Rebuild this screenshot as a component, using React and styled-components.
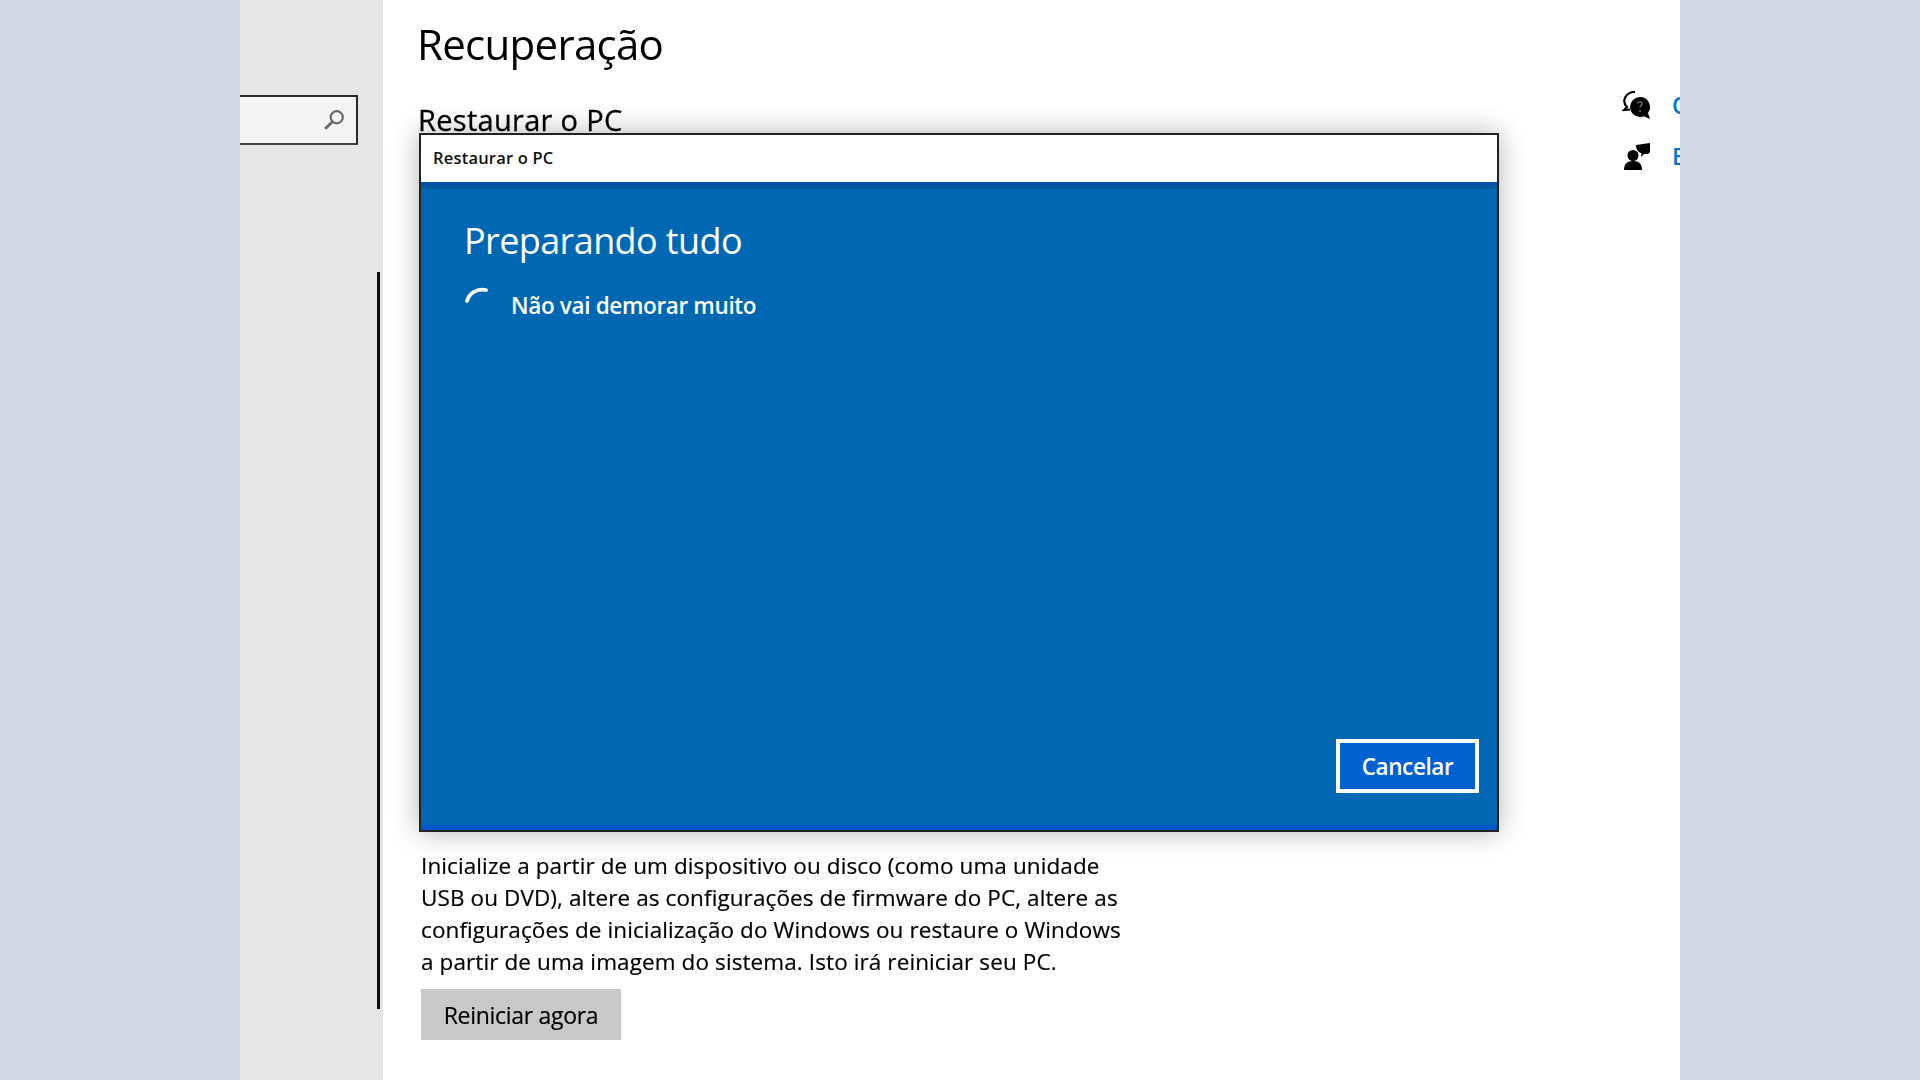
import React from "react";
import styled, { createGlobalStyle } from "styled-components";

const Global = createGlobalStyle`
  html, body { margin: 0; padding: 0; height: 100%; background: #d3d8e6; }
  body { font-family: "Open Sans", "Noto Sans", "Liberation Sans", sans-serif; overflow: hidden; }
`;

const Stage = styled.div`
  width: 1920px;
  height: 1080px;
  padding: 0 240px;
  box-sizing: border-box;
  background: #d3d8e6;
  display: flex;
  position: relative;
`;

const Sidebar = styled.aside`
  width: 143px;
  flex: none;
  background: #e6e6e6;
  padding-top: 95px;
  box-sizing: border-box;
  position: relative;
`;

const SearchBox = styled.div`
  width: 118px;
  height: 50px;
  box-sizing: border-box;
  background: #f3f3f3;
  border: 2px solid #2b2b2b;
  border-bottom-color: #444;
  border-left: none;
  display: flex;
  align-items: center;
  justify-content: flex-end;
  padding-right: 11px;
`;

const ScrollThumb = styled.div`
  position: absolute;
  left: 137px;
  top: 272px;
  width: 3px;
  height: 737px;
  background: #111;
`;

const Main = styled.main`
  flex: 1;
  background: #fff;
  display: flex;
  justify-content: space-between;
  overflow: hidden;
  padding-left: 35px;
`;

const Content = styled.div`
  display: flex;
  flex-direction: column;
  filter: blur(0.35px);
`;

const Title = styled.h1`
  margin: 17px 0 0 -1px;
  font-size: 42px;
  line-height: 54px;
  font-weight: 400;
  color: #000;
  letter-spacing: -0.7px;
`;

const SectionTitle = styled.h2`
  margin: 29px 0 0 0;
  font-size: 29px;
  line-height: 40px;
  font-weight: 500;
  -webkit-text-stroke: 0.3px #000;
  color: #000;
  letter-spacing: 0.3px;
`;

const Description = styled.p`
  margin: 710px 0 0 3px;
  width: 705px;
  font-size: 22.5px;
  line-height: 32px;
  color: #000;
  letter-spacing: 0.1px;
  -webkit-text-stroke: 0.2px #000;
`;

const RestartButton = styled.button`
  margin: 11px 0 0 3px;
  width: 200px;
  height: 51px;
  border: none;
  background: #c9c9c9;
  font: inherit;
  font-size: 23px;
  letter-spacing: -0.3px;
  -webkit-text-stroke: 0.2px #000;
  color: #000;
  padding: 0;
`;

const Help = styled.div`
  display: flex;
  flex-direction: column;
  gap: 21px;
  padding-top: 90px;
  width: 58px;
  flex: none;
  overflow: hidden;
`;

const HelpRow = styled.div`
  display: flex;
  align-items: center;
  gap: 20px;
  height: 30px;
  white-space: nowrap;
  & > svg { flex: none; }
`;

const HelpLink = styled.span`
  color: #0078d7;
  font-size: 23px;
  font-weight: 600;
`;

const Dialog = styled.section`
  position: absolute;
  left: 419px;
  top: 133px;
  width: 1080px;
  height: 699px;
  box-sizing: border-box;
  border: 2px solid #222;
  background: #0067b3;
  box-shadow: 0 0 26px rgba(0, 0, 0, 0.3);
  display: flex;
  flex-direction: column;
`;

const DialogBar = styled.header`
  height: 50px;
  flex: none;
  background: #fff;
  border-bottom: 3px solid #0050a8;
  box-sizing: border-box;
  display: flex;
  align-items: center;
  padding: 0 0 2px 12px;
  font-size: 16.5px;
  font-weight: 600;
  letter-spacing: 0.2px;
  color: #111;
`;

const DialogBody = styled.div`
  flex: 1;
  display: flex;
  flex-direction: column;
  padding: 30px 18px 32px 43px;
  color: #fff;
  border-top: 4px solid #005a9e;
  border-bottom: 5px solid #0058c8;
`;

const Heading = styled.h3`
  margin: -3px 0 0;
  font-size: 36px;
  line-height: 50px;
  font-weight: 400;
  letter-spacing: -0.6px;
`;

const Status = styled.div`
  display: flex;
  align-items: center;
  gap: 21px;
  margin-top: 24px;
  font-size: 22.5px;
  font-weight: 600;
  letter-spacing: -0.35px;
  line-height: 32px;
`;

const Actions = styled.div`
  margin-top: auto;
  display: flex;
  justify-content: flex-end;
`;

const CancelButton = styled.button`
  width: 143px;
  height: 54px;
  box-sizing: border-box;
  border: 4px solid #fff;
  background: #0062d0;
  color: #fff;
  font: inherit;
  font-size: 22.5px;
  font-weight: 600;
  letter-spacing: -0.4px;
  padding: 0;
`;

const SearchIcon = () => (
  <svg width="22" height="22" viewBox="0 0 20 20" fill="none" stroke="#6a6a6a" strokeWidth="2">
    <circle cx="12.5" cy="7.5" r="5.5" />
    <path d="M8.5 11.5 2 18" strokeWidth="2.6" />
  </svg>
);

const ChatIcon = () => (
  <svg width="30" height="30" viewBox="0 0 30 30">
    <path d="M13 2a10 9 0 0 0-8 15l-3 3 6-.5" fill="#fff" stroke="#000" strokeWidth="2.2" />
    <path d="M18 7a10 10 0 0 0 0 20c2 0 3-.4 4-.8l6 2.8-2-6a10 10 0 0 0-8-16z" fill="#000" />
    <path d="M15.5 13.5c1-2.5 5-2 4.5.5-.3 1.500-2 1.800-2 3.500" fill="none" stroke="#777" strokeWidth="1.3" />
    <circle cx="18" cy="21" r="1" fill="#777" />
  </svg>
);

const FeedbackIcon = () => (
  <svg width="30" height="30" viewBox="0 0 30 30" fill="#000">
    <circle cx="11" cy="14.5" r="5.5" />
    <path d="M2 29c0-6 3-9 9-9s9 3 9 9z" />
    <path d="M14 4 28 2v8c0 2-1.500 3-3 3h-3l-3 3 .5-4c-3-.5-5.500-3-5.500-8z" />
  </svg>
);

const Spinner = () => (
  <svg width="26" height="26" viewBox="0 0 26 26" fill="none" stroke="#fff" strokeWidth="3.8" strokeLinecap="round" style={{ marginTop: -20 }}>
    <path d="M3 18C5 11 12 5 22 7" />
  </svg>
);

export default function App() {
  return (
    <Stage>
      <Global />
      <Sidebar>
        <SearchBox>
          <SearchIcon />
        </SearchBox>
        <ScrollThumb />
      </Sidebar>
      <Main>
        <Content>
          <Title>Recuperação</Title>
          <SectionTitle>Restaurar o PC</SectionTitle>
          <Description>
            Inicialize a partir de um dispositivo ou disco (como uma unidade USB ou DVD), altere as configurações de
            firmware do PC, altere as configurações de inicialização do Windows ou restaure o Windows a partir de uma
            imagem do sistema. Isto irá reiniciar seu PC.
          </Description>
          <RestartButton>Reiniciar agora</RestartButton>
        </Content>
        <Help>
          <HelpRow>
            <ChatIcon />
            <HelpLink>Obter ajuda</HelpLink>
          </HelpRow>
          <HelpRow>
            <FeedbackIcon />
            <HelpLink>Enviar comentários</HelpLink>
          </HelpRow>
        </Help>
      </Main>
      <Dialog>
        <DialogBar>Restaurar o PC</DialogBar>
        <DialogBody>
          <Heading>Preparando tudo</Heading>
          <Status>
            <Spinner />
            Não vai demorar muito
          </Status>
          <Actions>
            <CancelButton>Cancelar</CancelButton>
          </Actions>
        </DialogBody>
      </Dialog>
    </Stage>
  );
}
